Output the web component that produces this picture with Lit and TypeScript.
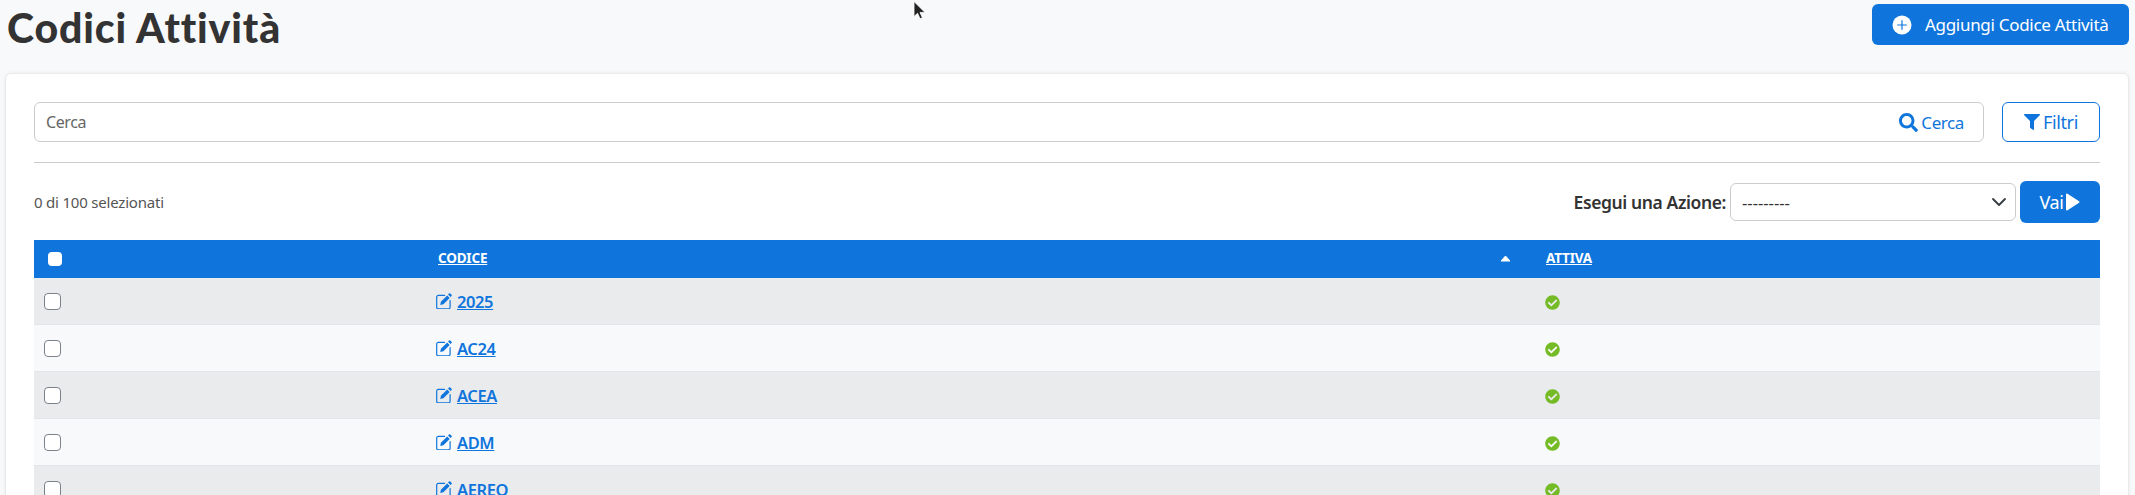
import { LitElement, html, css, svg } from 'lit';
import { customElement } from 'lit/decorators.js';

const ROWS = ['2025', 'AC24', 'ACEA', 'ADM', 'AEREO'];

const searchIcon = svg`<path d="M505 442.7L405.3 343c-4.5-4.5-10.6-7-17-7H372c27.6-35.3 44-79.7 44-128C416 93.1 322.9 0 208 0S0 93.1 0 208s93.1 208 208 208c48.3 0 92.7-16.4 128-44v16.3c0 6.4 2.5 12.5 7 17l99.7 99.7c9.4 9.4 24.6 9.4 33.9 0l28.3-28.3c9.4-9.4 9.4-24.6.1-34zM208 336c-70.7 0-128-57.2-128-128 0-70.7 57.2-128 128-128 70.7 0 128 57.2 128 128 0 70.7-57.2 128-128 128z"/>`;
const filterIcon = svg`<path d="M487.976 0H24.028C2.71 0-8.047 25.866 7.058 40.971L192 225.941V432c0 7.831 3.821 15.17 10.237 19.662l80 55.98C298.02 518.69 320 507.493 320 487.98V225.941l184.947-184.97C520.021 25.896 509.338 0 487.976 0z"/>`;
const checkIcon = svg`<path d="M504 256c0 136.967-111.033 248-248 248S8 392.967 8 256 119.033 8 256 8s248 111.033 248 248zM227.314 387.314l184-184c6.248-6.248 6.248-16.379 0-22.627l-22.627-22.627c-6.248-6.249-16.379-6.249-22.628 0L216 308.118l-70.059-70.059c-6.248-6.248-16.379-6.248-22.628 0l-22.627 22.627c-6.248 6.248-6.248 16.379 0 22.627l104 104c6.249 6.249 16.379 6.249 22.628.001z"/>`;
// outlined box, open at the top right, with a solid pen over it
const editIcon = svg`
  <path d="M8.6 2.4H2.3A1.6 1.6 0 0 0 .7 4v10.2a1.6 1.6 0 0 0 1.6 1.6h10.2a1.6 1.6 0 0 0 1.6-1.6V7.6" fill="none" stroke="currentColor" stroke-width="1.2" stroke-linecap="round"/>
  <path d="M4.2 11.9l.7-3.2 6.3-6.3 2.5 2.5-6.3 6.3z"/>
  <path d="M12 1.6l1-1a.9.9 0 0 1 1.3 0l1.2 1.2a.9.9 0 0 1 0 1.3l-1 1z"/>`;

@customElement('app-root')
export class AppRoot extends LitElement {
  static styles = css`
    :host {
      display: block;
      position: relative;
      height: 100vh;
      overflow: hidden;
      background: #f8f9fb;
      color: #333;
      font-family: "Noto Sans", "Liberation Sans", sans-serif;
      font-size: 16px;
      letter-spacing: -0.4px;
    }

    .page-head {
      display: flex;
      justify-content: space-between;
      align-items: flex-start;
      height: 73px;
      padding: 4px 6px 0 7px;
      box-sizing: border-box;
    }

    h1 {
      margin: 0;
      font-family: "Lato", sans-serif;
      font-size: 41px;
      line-height: 48px;
      font-weight: 900;
      letter-spacing: 0.85px;
      color: #333;
    }

    .add-btn {
      display: flex;
      align-items: center;
      box-sizing: border-box;
      width: 257px;
      height: 41px;
      padding-left: 20px;
      gap: 13px;
      background: #0f75dc;
      color: #fff;
      border-radius: 6px;
      font-size: 17px;
      letter-spacing: -0.3px;
    }

    .card {
      margin: 0 6px 0 5px;
      padding: 28px 28px 0;
      background: #fff;
      border: 1px solid #e9eaec;
      border-radius: 6px;
      box-shadow: 0 0 4px rgba(0, 0, 0, 0.06);
    }

    .search-row {
      display: flex;
      gap: 18px;
    }

    .search {
      flex: 1;
      display: flex;
      align-items: center;
      height: 40px;
      box-sizing: border-box;
      padding: 0 19px 0 11px;
      border: 1px solid #ccc;
      border-radius: 6px;
    }

    .search input {
      flex: 1;
      border: 0;
      outline: 0;
      padding: 0;
      font: inherit;
      font-size: 16px;
      letter-spacing: -0.4px;
      background: transparent;
    }

    .search input::placeholder {
      color: #666;
      opacity: 1;
    }

    .search-go,
    .filter-btn {
      display: flex;
      align-items: center;
      gap: 3px;
      color: #0f75dc;
      font-size: 17px;
    }

    .filter-btn {
      justify-content: center;
      box-sizing: border-box;
      width: 98px;
      height: 40px;
      border: 1px solid #0f75dc;
      border-radius: 6px;
      background: #fff;
      font-size: 18px;
    }

    hr {
      margin: 20px 0 18px;
      border: 0;
      border-top: 1px solid #ccc;
    }

    .action-row {
      display: flex;
      align-items: center;
      height: 42px;
      margin-bottom: 17px;
    }

    .count {
      flex: 1;
      font-size: 15px;
      letter-spacing: -0.2px;
      color: #555;
    }

    .action-label {
      font-size: 17.5px;
      font-weight: 600;
      margin-right: 4px;
    }

    .select {
      display: flex;
      align-items: center;
      justify-content: space-between;
      box-sizing: border-box;
      width: 286px;
      height: 38px;
      padding: 0 8px 0 11px;
      border: 1px solid #ccc;
      border-radius: 6px;
      font-size: 16.5px;
      letter-spacing: 0;
    }

    .go-btn {
      display: flex;
      align-items: center;
      justify-content: center;
      gap: 2px;
      box-sizing: border-box;
      width: 80px;
      height: 42px;
      margin-left: 4px;
      background: #0f75dc;
      color: #fff;
      border-radius: 6px;
      font-size: 18px;
    }

    table {
      width: 100%;
      table-layout: fixed;
      border-collapse: collapse;
    }

    th {
      height: 38px;
      padding: 0 10px;
      background: #0f75dc;
      text-align: left;
      font-size: 13.5px;
      font-weight: 700;
      color: #fff;
      letter-spacing: -0.2px;
    }

    th a {
      display: inline-block;
      margin-bottom: 2px;
      color: #fff;
      text-decoration: underline;
    }

    th.sort {
      position: relative;
    }

    .caret {
      position: absolute;
      right: 25px;
      top: 15px;
    }

    td {
      height: 46px;
      padding: 0 10px;
      border-bottom: 1px solid #e3e5e8;
    }

    tr.odd td {
      background: #e9ebed;
    }

    tr.even td {
      background: #f8f9fb;
    }

    .col-check {
      width: 374px;
    }

    .col-code {
      width: 1088px;
    }

    input[type='checkbox'] {
      appearance: none;
      display: block;
      box-sizing: border-box;
      margin: 0;
      background: #fff;
      border-radius: 4px;
      border: 1px solid #7c8289;
      width: 17px;
      height: 17px;
    }

    th input[type='checkbox'] {
      width: 14px;
      height: 14px;
      border: 0;
      margin-left: 4px;
    }

    .code {
      display: flex;
      align-items: center;
      gap: 5px;
      margin-left: -2px;
      color: #0f75dc;
    }

    .code a {
      color: #0f75dc;
      font-size: 16.5px;
      font-weight: 600;
      text-decoration: underline;
    }

    svg {
      display: block;
      flex: none;
      fill: currentColor;
    }

    .cursor {
      position: absolute;
      left: 913px;
      top: 1px;
    }

    .tick {
      color: #75bb25;
      margin: 2px 0 0 -1px;
    }
  `;

  render() {
    return html`
      <div class="page-head">
        <h1>Codici Attività</h1>
        <div class="add-btn">
          <svg width="20" height="20" viewBox="0 0 20 20">
            <circle cx="10" cy="10" r="9.5" fill="#fff"></circle>
            <path d="M10 5.2v9.6M5.2 10h9.6" stroke="#0f75dc" stroke-width="1.2" fill="none"></path>
          </svg>
          Aggiungi Codice Attività
        </div>
      </div>

      <div class="card">
        <div class="search-row">
          <div class="search">
            <input type="text" placeholder="Cerca" />
            <div class="search-go">
              <svg width="19" height="19" viewBox="0 0 512 512">${searchIcon}</svg>
              Cerca
            </div>
          </div>
          <div class="filter-btn">
            <svg width="16" height="16" viewBox="0 0 512 512">${filterIcon}</svg>
            Filtri
          </div>
        </div>

        <hr />

        <div class="action-row">
          <div class="count">0 di 100 selezionati</div>
          <div class="action-label">Esegui una Azione:</div>
          <div class="select">
            ---------
            <svg width="16" height="16" viewBox="0 0 16 16">
              <path d="M2 5l6 6 6-6" fill="none" stroke="#343a40" stroke-width="1.8" stroke-linecap="round" stroke-linejoin="round"></path>
            </svg>
          </div>
          <div class="go-btn">
            Vai
            <svg width="15" height="18" viewBox="0 0 15 18">
              <path d="M2 1.5L13.5 9 2 16.5z" fill="#fff" stroke="#fff" stroke-width="2" stroke-linejoin="round"></path>
            </svg>
          </div>
        </div>

        <table>
          <thead>
            <tr>
              <th class="col-check"><input type="checkbox" /></th>
              <th class="col-code sort">
                <a href="#">CODICE</a>
                <svg class="caret" width="11" height="7" viewBox="0 0 11 7">
                  <path d="M5.5 1L10 6H1z" fill="#fff" stroke="#fff" stroke-linejoin="round"></path>
                </svg>
              </th>
              <th><a href="#">ATTIVA</a></th>
            </tr>
          </thead>
          <tbody>
            ${ROWS.map(
              (code, i) => html`
                <tr class=${i % 2 === 0 ? 'odd' : 'even'}>
                  <td><input type="checkbox" /></td>
                  <td>
                    <div class="code">
                      <svg width="16" height="16" viewBox="0 0 16 16">${editIcon}</svg>
                      <a href="#">${code}</a>
                    </div>
                  </td>
                  <td>
                    <svg class="tick" width="15" height="15" viewBox="0 0 512 512">${checkIcon}</svg>
                  </td>
                </tr>
              `
            )}
          </tbody>
        </table>
      </div>

      <svg class="cursor" width="14" height="20" viewBox="0 0 14 20">
        <path d="M1 0.5v15l3.6-3.2 2.4 5.4 2.4-1-2.4-5.3h5z" fill="#222" stroke="#fff" stroke-width="0.8"></path>
      </svg>
    `;
  }
}
